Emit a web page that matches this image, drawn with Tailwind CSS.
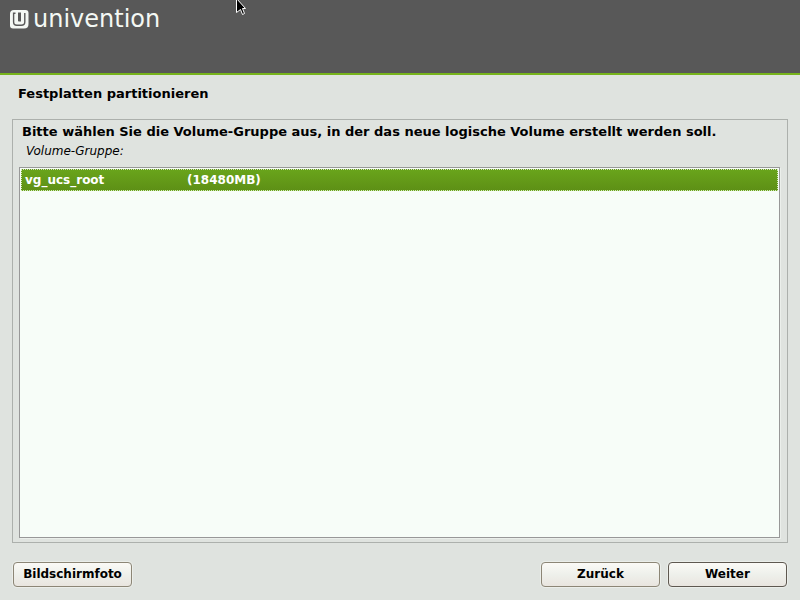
<!DOCTYPE html>
<html lang="de">

<head>
    <meta charset="UTF-8" />
    <meta name="viewport" content="width=device-width, initial-scale=1.0" />
    <title>Univention Installer | Festplatten partitionieren</title>
    <script src="https://cdn.jsdelivr.net/npm/@tailwindcss/browser@4"></script>
</head>

<body class="flex flex-col min-h-screen bg-[#dfe3df] text-black text-[13px] leading-4 font-['DejaVu_Sans',sans-serif]">
    <header class="site-header h-[75px] px-2.5 pt-[7px] bg-[#585858] border-b-2 border-[#77b41b]">
        <div class="header-brand flex items-center gap-1 text-[#f4f8f4]">
            <svg class="w-[19px] h-[19px]" viewBox="0 0 19 19" aria-hidden="true">
                <path fill="currentColor" d="M4 0H15.5Q18.5 0 18.5 3V14Q18.5 18.5 14 18.5H3Q0 18.5 0 15.5V4Q0 0 4 0Z" />
                <path fill="none" stroke="#585858" stroke-width="1.4" d="M5.5 3.2H3.6V12Q3.6 15.2 6.8 15.2H11.2Q14.8 15.2 14.8 12V3" />
                <path fill="#585858" d="M8 2.5H11V11.5H8.8Q8 11.5 8 10.7Z" />
            </svg>
            <span class="text-2xl leading-6">univention</span>
        </div>
    </header>

    <main class="flex-1 flex flex-col px-3 pt-[11px]">
        <h1 class="px-1.5 font-bold">Festplatten partitionieren</h1>

        <section class="flex-1 flex flex-col mt-[17px] pl-1.5 pr-[7px] pt-1 pb-1 border border-[#acb0ac]" aria-labelledby="group-title">
            <h2 id="group-title" class="px-[3px] font-bold">Bitte wählen Sie die Volume-Gruppe aus, in der das neue logische Volume erstellt werden soll.</h2>
            <p id="group-label" class="mt-[3px] px-[7px] text-xs leading-4 italic">Volume-Gruppe:</p>

            <div class="group-list flex-1 mt-2 p-px border border-[#989898] bg-[#f7fdf8] shadow-[1px_1px_0_#ebefeb]" role="radiogroup" aria-labelledby="group-label">
                <label class="grid grid-cols-[162px_1fr] items-center h-[22px] px-[3px] border border-dotted border-[#d5e8bc] bg-[#649b18] bg-linear-to-b from-[#69a41b] to-[#5e9016] text-xs leading-4 font-bold text-white">
                    <input type="radio" name="volume-group" value="vg_ucs_root" class="sr-only" checked />
                    <span>vg_ucs_root</span>
                    <span>(18480MB)</span>
                </label>
            </div>
        </section>
    </main>

    <footer class="flex items-center gap-2 px-[13px] pt-[19px] pb-[13px]">
        <button type="button" class="w-[119px] h-[25px] pb-0.5 rounded-sm border border-[#8c8676] bg-linear-to-b from-[#fbfaf6] via-[#eef0eb] to-[#e9e5df] shadow-[0_0_0_1px_#ebeeea] text-xs leading-4 font-bold">Bildschirmfoto</button>
        <button type="button" class="ml-auto w-[119px] h-[25px] pb-0.5 rounded-sm border border-[#8c8676] bg-linear-to-b from-[#fbfaf6] via-[#eef0eb] to-[#e9e5df] shadow-[0_0_0_1px_#ebeeea] text-xs leading-4 font-bold">Zurück</button>
        <button type="button" class="w-[119px] h-[25px] pb-0.5 rounded-sm border border-[#5e5850] bg-linear-to-b from-[#fbfaf6] via-[#eef0eb] to-[#e9e5df] shadow-[0_0_0_1px_#ebeeea] text-xs leading-4 font-bold">Weiter</button>
    </footer>

    <!-- mouse pointer -->
    <svg class="absolute left-[236px] top-0 w-[11px] h-[16px]" viewBox="0 0 11 16" aria-hidden="true">
        <path fill="#000" stroke="#fff" d="M.5 -1.5L9.5 8.5H6.5L8.5 13.5L6.5 14.5L4.5 9.5L.5 12.5Z" />
    </svg>
</body>

</html>
